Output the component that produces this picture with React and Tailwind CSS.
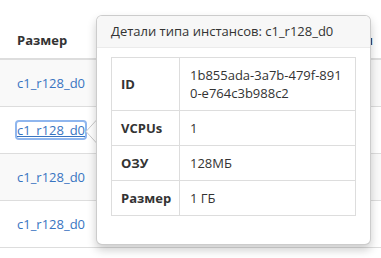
import React from "react";

const rows = ["c1_r128_d0", "c1_r128_d0", "c1_r128_d0", "c1_r128_d0"];

const details = [
  { label: "ID", value: ["1b855ada-3a7b-479f-891", "0-e764c3b988c2"] },
  { label: "VCPUs", value: ["1"] },
  { label: "ОЗУ", value: ["128МБ"] },
  { label: "Размер", value: ["1 ГБ"] },
];

export default function App() {
  return (
    <div
      className="relative w-[381px] h-[258px] overflow-hidden bg-white text-[13px] text-[#333]"
      style={{ fontFamily: '"Open Sans", "Noto Sans", sans-serif' }}
    >
      {/* Table behind */}
      <div className="w-full">
        <div className="flex h-[60px] items-end border-b-2 border-[#ddd] pb-[8px] font-bold">
          <div className="w-[96px] pl-[17px] leading-[19px]">Размер</div>
          <div className="flex-1 pr-[8px] text-right leading-[19px]">Имя</div>
        </div>
        {rows.map((r, i) => (
          <div
            key={i}
            className={
              "flex h-[47px] items-center border-b border-[#ddd] pl-[17px] " +
              (i % 2 === 0 ? "bg-[#f9f9f9]" : "bg-white")
            }
          >
            {i === 1 ? (
              <span className="inline-block h-[16px] rounded-[2px] leading-[16px] text-[#3874c1] underline ring-2 ring-[#8fb6ee]">
                {r}
              </span>
            ) : (
              <span className="leading-[18px] text-[#3874c1]">{r}</span>
            )}
          </div>
        ))}
      </div>

      {/* Popover arrow */}
      <svg
        className="absolute left-[85px] top-[119px]"
        width="13"
        height="25"
        viewBox="0 0 13 25"
      >
        <polygon points="12,0.5 1,12.5 12,24.5" fill="#fff" />
        <polyline
          points="12,0.5 1,12.5 12,24.5"
          fill="none"
          stroke="#c9c9c9"
          strokeWidth="1"
        />
      </svg>

      {/* Popover */}
      <div className="absolute left-[96px] top-[15px] w-[275px] rounded-[6px] border border-[rgba(0,0,0,0.2)] bg-white shadow-[0_5px_10px_rgba(0,0,0,0.2)]">
        <div className="h-[32px] rounded-t-[5px] border-b border-[#ebebeb] bg-[#f7f7f7] px-[14px] leading-[31px]">
          Детали типа инстансов: c1_r128_d0
        </div>
        <div className="px-[14px] pt-[9px] pb-[28px]">
          <div className="border border-[#ddd]">
            {details.map((d, i) => (
              <div
                key={d.label}
                className={"flex " + (i > 0 ? "border-t border-[#ddd]" : "")}
              >
                <div className="flex w-[68px] shrink-0 items-center border-r border-[#ddd] pl-[9px] font-bold leading-[18px]">
                  {d.label}
                </div>
                <div className="flex-1 py-[8px] pl-[10px] leading-[18px]">
                  {d.value.map((v, j) => (
                    <div key={j}>{v}</div>
                  ))}
                </div>
              </div>
            ))}
          </div>
        </div>
      </div>
    </div>
  );
}
